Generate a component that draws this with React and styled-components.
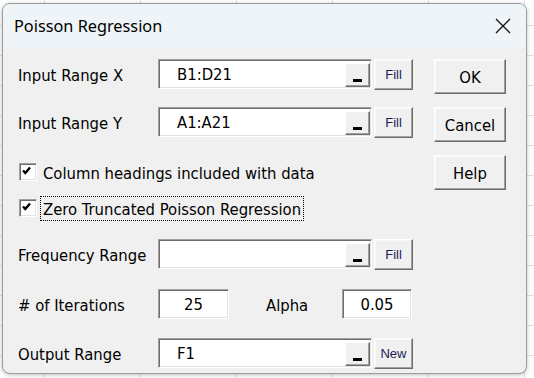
import React from "react";
import styled, { createGlobalStyle } from "styled-components";

const GlobalStyle = createGlobalStyle`
  html, body {
    margin: 0;
    height: 100%;
  }
  body {
    background-color: #ffffff;
    background-image: linear-gradient(to right, #dedede 1px, transparent 1px),
      linear-gradient(to bottom, #dedede 1px, transparent 1px);
    background-size: 96px 30px;
    background-position: 44px 25px;
    overflow: hidden;
  }
`;

const Window = styled.div`
  margin: 3px 0 0 2px;
  width: 525px;
  height: 371px;
  box-sizing: border-box;
  border: 1px solid #9c9c9c;
  border-radius: 8px;
  overflow: hidden;
  background: #f0f0f0;
  box-shadow: 0 1px 4px rgba(0, 0, 0, 0.25);
  display: flex;
  flex-direction: column;
`;

const TitleBar = styled.div`
  height: 44px;
  flex: none;
  background: #eef4f7;
  display: flex;
  align-items: center;
  justify-content: space-between;
  padding: 0 14px 0 11px;
  font-family: "Noto Sans", "Open Sans", sans-serif;
  font-size: 16.3px;
  color: #000;
`;

const CloseBox = styled.div`
  width: 18px;
  height: 18px;
  display: flex;
  align-items: center;
  justify-content: center;
`;

const Body = styled.div`
  display: flex;
  padding: 11px 0 0 15px;
  font-family: "DejaVu Sans Condensed", "DejaVu Sans", sans-serif;
  font-stretch: semi-condensed;
  font-size: 16.5px;
  color: #000;
`;

const LeftColumn = styled.div`
  width: 395px;
  display: flex;
  flex-direction: column;
`;

const RightColumn = styled.div`
  margin-left: 21px;
  display: flex;
  flex-direction: column;
  gap: 13px;
`;

const Row = styled.div`
  display: flex;
  align-items: ${(p) => (p.$align ? p.$align : "flex-start")};
  height: ${(p) => p.$h || 31}px;
  margin-top: ${(p) => p.$mt || 0}px;
`;

const Label = styled.div`
  width: ${(p) => p.$w || 140}px;
  margin-left: ${(p) => p.$ml || 0}px;
  height: 30px;
  line-height: 30px;
  padding-top: 2px;
  box-sizing: border-box;
  white-space: nowrap;
`;

const Field = styled.div`
  width: ${(p) => p.$w}px;
  height: 30px;
  box-sizing: border-box;
  background: #fff;
  border-style: solid;
  border-width: 1px;
  border-color: #a0a0a0 #ffffff #ffffff #a0a0a0;
  box-shadow: inset 1px 1px 0 #6e6e6e, inset -1px -1px 0 #e3e3e3;
  display: flex;
  padding: 1px;
`;

const FieldText = styled.div`
  flex: 1;
  line-height: 28px;
  padding-left: ${(p) => (p.$center ? 0 : 17)}px;
  text-align: ${(p) => (p.$center ? "center" : "left")};
  white-space: nowrap;
`;

const DropButton = styled.div`
  align-self: flex-end;
  width: 25px;
  height: 24px;
  box-sizing: border-box;
  background: #f0f0f0;
  border-style: solid;
  border-width: 1px;
  border-color: #ffffff #6d6d6d #6d6d6d #ffffff;
  box-shadow: inset -1px -1px 0 #a0a0a0;
  display: flex;
  align-items: flex-end;
  justify-content: center;
  padding-bottom: 4px;
`;

const Dash = styled.span`
  width: 9px;
  height: 3px;
  background: #000;
`;

const Button = styled.div`
  width: ${(p) => p.$w}px;
  height: ${(p) => p.$h}px;
  margin-left: ${(p) => p.$ml || 0}px;
  box-sizing: border-box;
  background: #f0f0f0;
  border-style: solid;
  border-width: 1px;
  border-color: #ffffff #6d6d6d #6d6d6d #ffffff;
  box-shadow: inset -1px -1px 0 #a0a0a0, inset 1px 1px 0 #f8f8f8;
  display: flex;
  align-items: center;
  justify-content: center;
  font-family: ${(p) =>
    p.$small
      ? '"Liberation Sans Narrow", "Liberation Sans", sans-serif'
      : '"DejaVu Sans Condensed", "DejaVu Sans", sans-serif'};
  font-size: ${(p) => (p.$small ? 13 : 16.5)}px;
  color: ${(p) => (p.$small ? "#1b1b55" : "#000")};
  padding-top: ${(p) => (p.$small ? 0 : 2)}px;
`;

const CheckBox = styled.div`
  width: 18px;
  height: 18px;
  margin-left: 1px;
  box-sizing: border-box;
  background: #fff;
  border-style: solid;
  border-width: 1px;
  border-color: #a0a0a0 #ffffff #ffffff #a0a0a0;
  box-shadow: inset 1px 1px 0 #6e6e6e, inset -1px -1px 0 #e3e3e3;
  display: flex;
  align-items: flex-start;
  justify-content: flex-start;
`;

const CheckLabel = styled.div`
  margin-left: 3px;
  padding: 0 2px;
  height: 25px;
  line-height: 25px;
  box-sizing: border-box;
  border: 1px dotted ${(p) => (p.$focus ? "#000" : "transparent")};
  white-space: nowrap;
`;

const Check = () => (
  <svg width="14" height="14" viewBox="0 0 14 14">
    <path d="M3 6.5 L5.3 9 L10 3.5" fill="none" stroke="#000" strokeWidth="2.4" />
  </svg>
);

const RangeRow = ({ label, value, btn, mt }) => (
  <Row $mt={mt}>
    <Label>{label}</Label>
    <Field $w={214}>
      <FieldText>{value}</FieldText>
      <DropButton>
        <Dash />
      </DropButton>
    </Field>
    <Button $w={39} $h={31} $ml={2} $small>
      {btn}
    </Button>
  </Row>
);

export default function App() {
  return (
    <>
      <GlobalStyle />
      <Window>
        <TitleBar>
          <span>Poisson Regression</span>
          <CloseBox>
            <svg width="16" height="16" viewBox="0 0 16 16">
              <path d="M1 1 L15 15 M15 1 L1 15" stroke="#111" strokeWidth="1.3" />
            </svg>
          </CloseBox>
        </TitleBar>
        <Body>
          <LeftColumn>
            <RangeRow label="Input Range X" value="B1:D21" btn="Fill" />
            <RangeRow label="Input Range Y" value="A1:A21" btn="Fill" mt={17} />
            <Row $mt={25} $h={18} $align="center">
              <CheckBox>
                <Check />
              </CheckBox>
              <CheckLabel>Column headings included with data</CheckLabel>
            </Row>
            <Row $mt={18} $h={18} $align="center">
              <CheckBox>
                <Check />
              </CheckBox>
              <CheckLabel $focus>Zero Truncated Poisson Regression</CheckLabel>
            </Row>
            <RangeRow label="Frequency Range" value="" btn="Fill" mt={22} />
            <Row $mt={19}>
              <Label># of Iterations</Label>
              <Field $w={71}>
                <FieldText $center>25</FieldText>
              </Field>
              <Label $w={76} $ml={37}>
                Alpha
              </Label>
              <Field $w={70}>
                <FieldText $center>0.05</FieldText>
              </Field>
            </Row>
            <RangeRow label="Output Range" value="F1" btn="New" mt={18} />
          </LeftColumn>
          <RightColumn>
            <Button $w={72} $h={35}>OK</Button>
            <Button $w={72} $h={35}>Cancel</Button>
            <Button $w={72} $h={35}>Help</Button>
          </RightColumn>
        </Body>
      </Window>
    </>
  );
}
